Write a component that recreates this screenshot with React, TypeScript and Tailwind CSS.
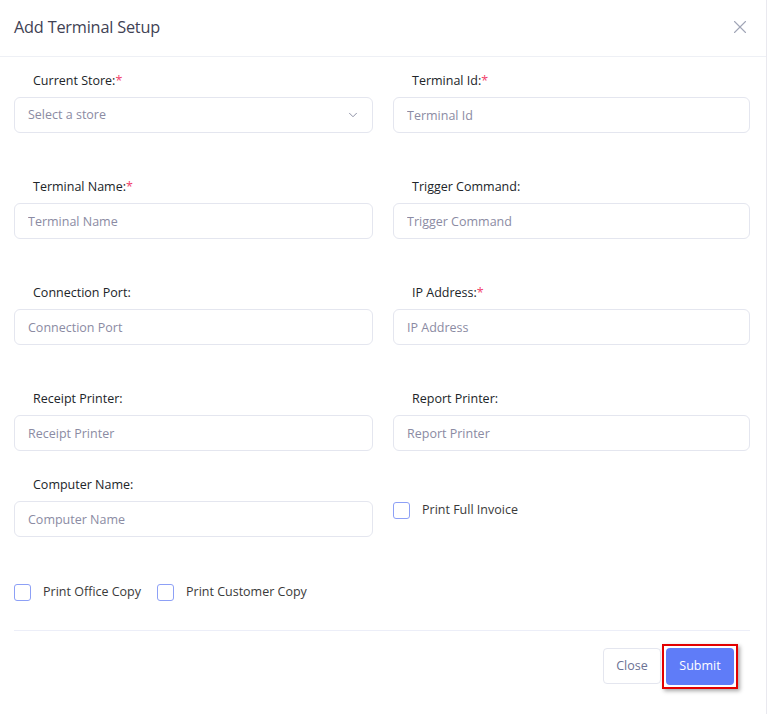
import React from 'react';
import { X, ChevronDown } from 'lucide-react';

const Label: React.FC<{ text: string; required?: boolean }> = ({ text, required }) => (
  <label className="block pl-[19px] mb-[7px] text-[12.5px] leading-[18px] text-[#212529]">
    {text}
    {required && <span className="text-[#f1416c]">*</span>}
  </label>
);

const Input: React.FC<{ placeholder: string }> = ({ placeholder }) => (
  <input
    placeholder={placeholder}
    className="block w-full h-9 px-[13px] rounded-md border border-[#e4e6ef] bg-white text-[12.5px] text-[#3f4254] placeholder:text-[#8b8ba3] outline-none"
  />
);

const Check: React.FC<{ text: string }> = ({ text }) => (
  <label className="flex items-center gap-3">
    <span className="w-[17px] h-[17px] rounded-[3px] border border-[#8da0f6] bg-white" />
    <span className="text-[12.5px] text-[#3a3a3a]">{text}</span>
  </label>
);

const Field: React.FC<{ label: string; placeholder: string; required?: boolean }> = ({ label, placeholder, required }) => (
  <div>
    <Label text={label} required={required} />
    <Input placeholder={placeholder} />
  </div>
);

const App: React.FC = () => {
  return (
    <div className="w-[768px] h-[714px] bg-white font-['Open_Sans',sans-serif] overflow-hidden">
      <div className="w-[767px] h-full border-r border-[#e9e9ef] bg-white">
        <div className="h-[57px] pl-[14px] pr-[15px] flex items-center justify-between border-b border-[#eef0f5]">
          <h1 className="text-[16.3px] text-[#3f4254] tracking-[-0.2px] -mt-[1px]">Add Terminal Setup</h1>
          <X className="h-[22px] w-[22px] text-[#a1a5b7] -mt-[2px]" strokeWidth={1.2} />
        </div>

        <div className="px-[14px] pt-[15px]">
          <div className="grid grid-cols-[359px_357px] gap-x-5">
            <div className="mb-[45px]">
              <Label text="Current Store:" required />
              <div className="relative">
                <div className="h-9 px-[13px] rounded-md border border-[#e4e6ef] flex items-center text-[12.5px] text-[#8b8ba3]">
                  Select a store
                </div>
                <ChevronDown className="absolute right-[13px] top-[11px] h-[14px] w-[14px] text-[#7e8299]" strokeWidth={1.5} />
              </div>
            </div>
            <div className="mb-[45px]">
              <Field label="Terminal Id:" placeholder="Terminal Id" required />
            </div>

            <div className="mb-[45px]">
              <Field label="Terminal Name:" placeholder="Terminal Name" required />
            </div>
            <div className="mb-[45px]">
              <Field label="Trigger Command:" placeholder="Trigger Command" />
            </div>

            <div className="mb-[45px]">
              <Field label="Connection Port:" placeholder="Connection Port" />
            </div>
            <div className="mb-[45px]">
              <Field label="IP Address:" placeholder="IP Address" required />
            </div>

            <div className="mb-[25px]">
              <Field label="Receipt Printer:" placeholder="Receipt Printer" />
            </div>
            <div className="mb-[25px]">
              <Field label="Report Printer:" placeholder="Report Printer" />
            </div>

            <div>
              <Field label="Computer Name:" placeholder="Computer Name" />
            </div>
            <div className="pt-[25px]">
              <Check text="Print Full Invoice" />
            </div>
          </div>

          <div className="flex items-center gap-[16px] mt-[46px]">
            <Check text="Print Office Copy" />
            <Check text="Print Customer Copy" />
          </div>

          <div className="mt-[28px] border-t border-[#eceef8] mr-[2px]" />

          <div className="flex justify-end items-center pt-[13px] pr-[14px]">
            <button className="h-[36px] w-[58px] rounded-[4px] border border-[#e4e6ef] bg-white text-[12.5px] text-[#6c7293] mr-px">
              Close
            </button>
            <span className="border-2 border-[#e30000] p-[2px] shadow-[2px_2px_4px_rgba(0,0,0,0.35)]">
              <button className="block h-[37px] w-[68px] rounded-[4px] bg-[#5f7cf8] text-[12.5px] text-white">
                Submit
              </button>
            </span>
          </div>
        </div>
      </div>
    </div>
  );
};

export default App;
